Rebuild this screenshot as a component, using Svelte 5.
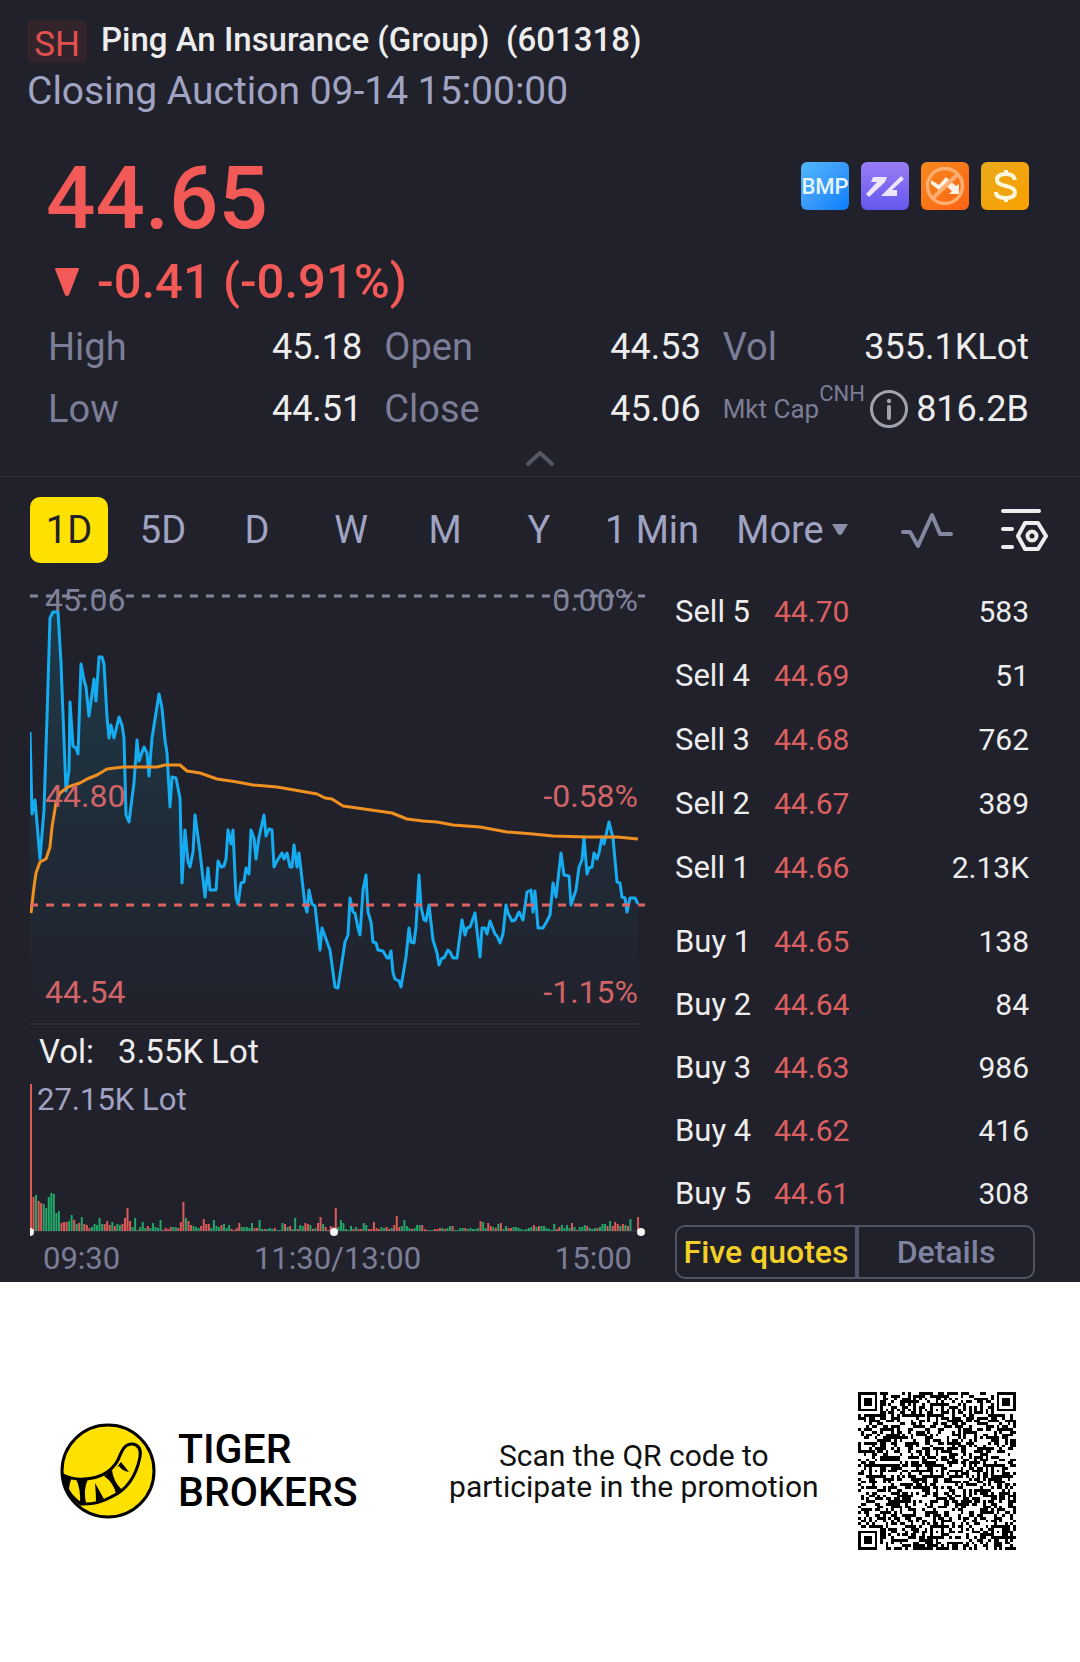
<script>
  const stats = [
    { label: 'High', value: '45.18' },
    { label: 'Open', value: '44.53' },
    { label: 'Vol', value: '355.1KLot' },
    { label: 'Low', value: '44.51' },
    { label: 'Close', value: '45.06' },
    { label: 'Mkt Cap', value: '816.2B', currency: 'CNH' },
  ];

  const periods = ['1D', '5D', 'D', 'W', 'M', 'Y', '1 Min'];
  let period = $state('1D');
  let panel = $state('quotes');

  const sells = [
    ['Sell 5', '44.70', '583'],
    ['Sell 4', '44.69', '51'],
    ['Sell 3', '44.68', '762'],
    ['Sell 2', '44.67', '389'],
    ['Sell 1', '44.66', '2.13K'],
  ];
  const buys = [
    ['Buy 1', '44.65', '138'],
    ['Buy 2', '44.64', '84'],
    ['Buy 3', '44.63', '986'],
    ['Buy 4', '44.62', '416'],
    ['Buy 5', '44.61', '308'],
  ];

  const price =
    '30,732 32,814 35,800 40,859 44,810 47,717 50,618 53,612 58,612 61,663 66,791 69,770 70,702 73,746 76,748 78,754 81,664 84,680 86,687 89,716 94,679 96,701 99,657 102,657 104,664 107,717 109,738 111,725 114,738 119,717 122,725 124,738 126,815 129,822 132,798 134,783 137,740 139,761 144,747 147,753 149,776 152,738 159,694 162,708 165,740 167,753 170,807 172,777 176,778 180,798 182,883 185,830 188,862 190,867 193,852 195,815 200,852 205,897 208,868 210,890 216,890 218,861 221,867 224,866 226,859 228,830 231,844 233,830 236,897 238,904 241,883 244,882 246,868 249,874 251,830 254,838 256,859 259,837 264,815 266,836 269,829 272,830 274,867 277,861 282,853 284,859 287,853 290,867 292,867 294,845 297,867 299,853 305,905 307,912 309,890 312,904 315,906 320,950 322,928 330,950 335,987 338,988 345,942 348,935 350,898 353,912 355,913 358,928 360,935 363,890 366,875 368,912 371,922 373,942 376,943 378,950 383,951 387,958 389,958 391,951 393,973 395,979 399,981 401,987 406,957 409,928 411,942 414,943 416,927 419,875 421,907 424,920 426,921 429,905 433,940 437,953 439,965 442,958 444,958 448,950 450,952 453,958 457,958 462,920 465,935 467,928 470,927 475,913 480,957 482,928 485,928 487,934 490,921 495,934 497,936 500,943 503,934 506,905 508,913 512,921 515,920 519,912 523,920 527,892 531,890 533,912 535,891 538,928 543,928 547,921 550,915 553,883 556,897 561,853 564,875 569,876 571,905 576,890 579,867 582,860 584,837 587,874 589,868 592,867 594,853 597,859 599,853 602,837 604,844 609,822 613,838 617,882 620,883 622,897 625,898 627,912 630,898 635,898 638,904';

  const average =
    '31,913 34,887 36,873 40,862 46,859 50,847 52,827 56,803 60,793 68,787 80,783 87,779 97,775 107,769 123,767 137,767 157,767 165,765 180,765 187,771 200,773 217,779 237,782 253,785 277,787 300,791 317,794 325,798 332,799 343,806 357,808 392,813 407,819 423,821 437,822 453,825 480,827 507,832 533,834 553,836 587,837 617,837 638,839';

  // One entry per minute: r = price fell, g = price rose, number = bar height
  const volume =
    'r147 r34 g36 r30 r28 g27 g23 g34 g38 g37 g18 g20 r8 r9 r9 g10 g16 r11 g7 r8 g14 r7 r6 r3 g4 g7 g6 g13 g7 r7 r10 r6 g9 r5 g7 g6 r7 r13 r23 r10 g4 g13 r1 g4 g9 g3 r5 g3 g8 g4 g3 g11 r1 r3 r2 r4 g4 g4 r3 r9 r29 g13 r10 r6 g5 g4 g3 r5 r12 r7 r7 g3 g11 g5 g4 r6 g7 g3 g6 r2 r1 r3 r8 g4 g4 g4 g3 g8 r3 r3 g11 g2 r2 g2 g3 g2 r3 g1 g1 g8 r7 g4 r5 g2 g13 r2 g6 g5 r8 r7 g6 r2 g3 r8 r14 g7 r4 r1 r5 r4 r23 g4 g11 g8 g2 g1 g5 r2 g4 r2 r2 g8 g6 r2 r2 r9 r3 r2 g4 g3 r4 r2 g3 r6 r15 r4 g5 g11 g5 g3 r2 g3 g6 g6 r6 r2 r1 g1 g1 r2 r2 r3 g3 r2 g3 g5 r5 g1 g1 g3 g3 r3 g2 g3 g2 g2 g3 r10 g9 g3 r8 r5 g4 r3 g7 r8 g2 g5 r3 r3 g4 g4 g3 g2 g1 g2 g3 g4 r6 g4 r5 g5 g5 g3 g2 g1 g7 r2 r4 g6 g3 g6 g3 r8 g4 r1 g4 g4 g6 r5 g3 g2 g3 r3 g4 g7 g7 r5 g10 r5 r9 r7 g5 r7 g6 r5 g12 g0 g0 r14';

  const bars = volume.split(' ').map((v, i) => ({ up: v[0] === 'g', h: +v.slice(1), x: i * 2.54 }));

  const QR = 57;

  function frameCell(dx, dy, r) {
    const d = Math.max(Math.abs(dx), Math.abs(dy));
    return r === 3 ? d === 3 || d < 2 : d !== 1;
  }

  function buildCode() {
    let seed = 601318;
    let d = '';
    for (let y = 0; y < QR; y++) {
      for (let x = 0; x < QR; x++) {
        seed = (Math.imul(seed, 1664525) + 1013904223) >>> 0;
        let on = seed / 4294967296 < 0.5;
        if (x === 6 || y === 6) on = (x + y) % 2 === 0;
        for (const cx of [6, 28, 50])
          for (const cy of [6, 28, 50])
            if (Math.abs(x - cx) < 3 && Math.abs(y - cy) < 3) on = frameCell(x - cx, y - cy, 2);
        for (const [cx, cy] of [[3, 3], [QR - 4, 3], [3, QR - 4]])
          if (Math.abs(x - cx) < 5 && Math.abs(y - cy) < 5)
            on = Math.max(Math.abs(x - cx), Math.abs(y - cy)) < 4 && frameCell(x - cx, y - cy, 3);
        if (on) d += `M${x} ${y}h1v1h-1z`;
      }
    }
    return d;
  }
  const code = buildCode();
</script>

<main>
  <section class="quote">
    <header>
      <div class="name">
        <span class="market">SH</span>
        <h1>Ping An Insurance (Group)&nbsp; (601318)</h1>
      </div>
      <p class="status">Closing Auction 09-14 15:00:00</p>
    </header>

    <div class="summary">
      <div class="last">
        <strong>44.65</strong>
        <p class="change">
          <svg viewBox="0 0 24 28" width="24" height="28" aria-hidden="true"><path d="M0 1Q0 0 1 0H23Q24 0 24 1L14 27Q12 29 10 27Z" fill="#f35956" /></svg>
          -0.41 (-0.91%)
        </p>
      </div>
      <div class="badges">
        <svg viewBox="0 0 48 48" role="img" aria-label="BMP">
          <defs><linearGradient id="b1" x1="0" y1="0" x2="1" y2="1"><stop offset="0" stop-color="#4fb8fb" /><stop offset=".5" stop-color="#3a9bfa" /><stop offset="1" stop-color="#0b7cff" /></linearGradient></defs>
          <rect width="48" height="48" rx="6" fill="url(#b1)" />
          <text x="24" y="32" text-anchor="middle" class="bmp">BMP</text>
        </svg>
        <svg viewBox="0 0 48 48" aria-hidden="true">
          <defs><linearGradient id="b2" x1="0" y1="0" x2="0" y2="1"><stop offset="0" stop-color="#9a7df4" /><stop offset="1" stop-color="#6358ee" /></linearGradient></defs>
          <rect width="48" height="48" rx="6" fill="url(#b2)" />
          <path d="M12 15h14L24 20L8 35l-3-3L16 20h-6zM40 14l3 3L31 28h5v6H20z" fill="#eee6ff" />
        </svg>
        <svg viewBox="0 0 48 48" aria-hidden="true">
          <defs><linearGradient id="b3" x1="0" y1="0" x2="1" y2="1"><stop offset="0" stop-color="#f58a1f" /><stop offset="1" stop-color="#ff6212" /></linearGradient></defs>
          <rect width="48" height="48" rx="6" fill="url(#b3)" />
          <path d="M10 18l8 5 7-8 10 9 3-2v10H28l3-3-6-5-6 5-9-7z" fill="#fff3e8" />
          <circle cx="24" cy="24" r="17.500" fill="none" stroke="#ffae70" stroke-width="3.500" />
          <path d="M36 13L12 36" stroke="#ffae70" stroke-width="4" />
        </svg>
        <svg viewBox="0 0 48 48" aria-hidden="true">
          <defs><linearGradient id="b4" x1="0" y1="0" x2="1" y2="1"><stop offset="0" stop-color="#e9aa1c" /><stop offset="1" stop-color="#fa9f00" /></linearGradient></defs>
          <rect width="48" height="48" rx="6" fill="url(#b4)" />
          <path d="M34 18Q33 12 25 12Q16 12 16 18Q16 22 25 24Q34 26 34 30Q34 36 25 36Q15 36 15 30M25 8v4M25 36v4" fill="none" stroke="#fff8dc" stroke-width="4" />
        </svg>
      </div>
    </div>

    <dl class="stats">
      {#each stats as s}
        <div>
          <dt class:small={s.currency}>{s.label}{#if s.currency}<sup>{s.currency}</sup>{/if}</dt>
          {#if s.currency}
            <button class="plain info" aria-label="About market cap">
              <svg viewBox="0 0 40 40" width="40" height="40"><circle cx="20" cy="20" r="17.500" fill="none" stroke="#a0a2b0" stroke-width="3" /><circle cx="20" cy="12" r="2.200" fill="#a0a2b0" /><path d="M20 18v11" stroke="#a0a2b0" stroke-width="4" stroke-linecap="round" /></svg>
            </button>
          {/if}
          <dd>{s.value}</dd>
        </div>
      {/each}
    </dl>

    <button class="plain fold" aria-label="Collapse details">
      <svg viewBox="0 0 30 18" width="30" height="18"><path d="M3 15L15 4L27 15" fill="none" stroke="#565866" stroke-width="4" stroke-linecap="round" stroke-linejoin="round" /></svg>
    </button>

    <nav class="periods">
      {#each periods as p}
        <button class="plain" class:active={period === p} onclick={() => (period = p)}>{p}</button>
      {/each}
      <button class="plain more">More <svg viewBox="0 0 16 12" width="16" height="12"><path d="M0 0H16L10 10Q8 12 6 10Z" fill="#8a8ea9" /></svg></button>
      <button class="plain" aria-label="Indicators">
        <svg viewBox="0 0 54 38" width="54" height="38"><path d="M3 21H10L18 35L32 4L40 23H51" fill="none" stroke="#83879f" stroke-width="4" stroke-linecap="round" stroke-linejoin="round" /></svg>
      </button>
      <button class="plain" aria-label="Chart settings">
        <svg viewBox="0 0 48 44" width="48" height="44" fill="none" stroke="#ededed" stroke-width="4" stroke-linecap="round" stroke-linejoin="round"><path d="M3 3H39M3 21H12M3 39H12M25 15H38L46 28L38 41H25L18 28Z" /><circle cx="32" cy="28" r="4.500" /></svg>
      </button>
    </nav>

    <div class="board">
      <div class="charts">
        <svg class="chart" viewBox="30 579 615 446" role="img" aria-label="Intraday price">
          <defs><linearGradient id="area" x1="0" y1="0" x2="0" y2="1"><stop offset="0" stop-color="#0fb8e0" stop-opacity=".16" /><stop offset="1" stop-color="#0fb8e0" stop-opacity="0" /></linearGradient></defs>
          <polygon points="30,1024 {price} 638,1024" fill="url(#area)" />
          <path d="M30 596H645" stroke="#83869c" stroke-width="3" stroke-dasharray="8 8" />
          <path d="M30 1024H645" stroke="#2f303c" stroke-width="1" />
          <polyline points={price} fill="none" stroke="#16acf2" stroke-width="3" stroke-linejoin="round" />
          <polyline points={average} fill="none" stroke="#ef9021" stroke-width="3" stroke-linejoin="round" />
          <path d="M30 905H645" stroke="#dc6465" stroke-width="3" stroke-dasharray="8 8" />
          <g class="axis">
            <text x="45" y="611" class="flat">45.06</text>
            <text x="45" y="807">44.80</text>
            <text x="45" y="1003">44.54</text>
            <g text-anchor="end">
              <text x="638" y="611" class="flat">0.00%</text>
              <text x="638" y="807">-0.58%</text>
              <text x="638" y="1003">-1.15%</text>
            </g>
          </g>
        </svg>
        <p class="volnow"><span>Vol:</span><span>3.55K Lot</span></p>
        <svg class="volume" viewBox="0 -4 615 157" role="img" aria-label="Volume">
          <path d="M0 148H615" stroke="#3a3c48" stroke-width="1" />
          {#each bars as b}
            <rect x={b.x} y={148 - b.h} width="2" height={b.h} fill={b.up ? '#23a768' : '#dc5a57'} />
          {/each}
          <text x="7" y="27">27.15K Lot</text>
          <g fill="#f4f4f4"><circle cx="0" cy="149" r="4" /><circle cx="304" cy="149" r="4" /><circle cx="611" cy="149" r="4" /></g>
        </svg>
        <div class="times"><time>09:30</time><time>11:30/13:00</time><time>15:00</time></div>
      </div>

      <div class="book">
        <table>
          {#each [sells, buys] as side}
            <tbody>
              {#each side as [level, p, lots]}
                <tr><th scope="row">{level}</th><td class="p">{p}</td><td class="lots">{lots}</td></tr>
              {/each}
            </tbody>
          {/each}
        </table>
        <div class="tabs">
          <button class="plain" class:on={panel === 'quotes'} onclick={() => (panel = 'quotes')}>Five quotes</button>
          <button class="plain" class:on={panel === 'details'} onclick={() => (panel = 'details')}>Details</button>
        </div>
      </div>
    </div>
  </section>

  <footer>
    <div class="brand">
      <svg viewBox="0 0 96 96" width="96" height="96" aria-hidden="true">
        <circle cx="48" cy="48" r="46" fill="#ffe100" />
        <path d="M3 52Q14 57 24 56Q48 55 58 37Q60 32 62 28Q66 20 73 21Q82 23 80 34Q74 64 51 74Q37 82 21 81Q5 70 3 52Z" fill="#ffe100" stroke="#000" stroke-width="3" />
        <path d="M2 50L12 55Q9 60 9 69Q3 62 2 50ZM16 56H28Q23 67 26 80L20 81Q21 66 16 56ZM35 60L44 76L36 79Q36 70 35 60ZM44 53L52 47Q53 58 62 67L56 71Q54 60 44 53ZM57 44L61 39L69 49Q62 48 59 43Z" fill="#000" />
        <circle cx="48" cy="48" r="46" fill="none" stroke="#000" stroke-width="3" />
      </svg>
      <p>TIGER<br />BROKERS</p>
    </div>
    <p class="scan">Scan the QR code to<br />participate in the promotion</p>
    <svg class="qr" viewBox="0 0 57 57" shape-rendering="crispEdges" role="img" aria-label="QR code"><path d={code} /></svg>
  </footer>
</main>

<style>
  :global(body) {
    margin: 0;
    background: #fff;
  }
  main {
    font-family: Roboto, 'Liberation Sans', sans-serif;
    color: #ededed;
  }
  p,
  h1,
  dl,
  dd {
    margin: 0;
  }
  svg {
    display: block;
    flex: none;
  }
  .plain {
    appearance: none;
    border: 0;
    margin: 0;
    padding: 0;
    background: none;
    color: inherit;
    font: inherit;
    cursor: pointer;
  }
  .quote {
    background: #21212b;
  }
  header {
    padding: 20px 27px 0;
  }
  .name {
    display: flex;
    gap: 14px;
  }
  .market {
    box-sizing: border-box;
    width: 60px;
    height: 43px;
    line-height: 49px;
    border-radius: 6px;
    background: #33242c;
    color: #e0504f;
    font-size: 35px;
    text-align: center;
  }
  h1 {
    font-size: 33px;
    font-weight: 500;
    line-height: 40px;
  }
  .status {
    font-size: 39px;
    line-height: 56px;
    color: #a0a4c2;
  }
  .summary {
    display: flex;
    justify-content: space-between;
    padding: 43px 51px 0 46px;
    color: #f35956;
  }
  .last strong {
    display: block;
    font-size: 87px;
    font-weight: 500;
    line-height: 72px;
  }
  .change {
    display: flex;
    align-items: center;
    gap: 18px;
    padding-left: 9px;
    margin-top: 20px;
    font-size: 49px;
    font-weight: 500;
    line-height: 56px;
  }
  .badges {
    display: flex;
    gap: 12px;
  }
  .badges svg {
    width: 48px;
    height: 48px;
  }
  .bmp {
    font-size: 22px;
    font-weight: 500;
    fill: #e4f5ff;
  }
  .stats {
    display: grid;
    grid-template-columns: 314fr 316fr 306fr;
    column-gap: 22px;
    padding: 6px 51px 0 48px;
  }
  .stats div {
    display: flex;
    align-items: center;
    height: 62px;
  }
  dt {
    font-size: 38px;
    color: #7b7e96;
  }
  dt.small {
    font-size: 26px;
    line-height: 32px;
  }
  sup {
    font-size: 22px;
    line-height: 0;
    vertical-align: 17px;
  }
  .info {
    margin-left: 4px;
  }
  dd {
    margin-left: auto;
    font-size: 36px;
  }
  .fold {
    display: flex;
    justify-content: center;
    width: 100%;
    height: 37px;
    padding-top: 9px;
    border-bottom: 1px solid #2f303c;
  }
  .periods {
    display: grid;
    grid-template-columns: repeat(6, 94fr) 132fr 148fr 122fr 72fr;
    align-items: center;
    padding: 20px 20px 0 22px;
    font-size: 38px;
    line-height: 66px;
    color: #a0a4c2;
  }
  .periods button {
    display: flex;
    justify-content: center;
    align-items: center;
    height: 66px;
    white-space: nowrap;
  }
  .periods .active {
    margin: 0 8px;
    border-radius: 10px;
    background: #ffe100;
    color: #21212b;
  }
  .more {
    gap: 8px;
  }
  .board {
    display: grid;
    grid-template-columns: 615fr 360fr;
    column-gap: 30px;
    padding: 16px 45px 0 30px;
  }
  .chart,
  .volume {
    width: 100%;
    height: auto;
  }
  .axis {
    font-size: 32px;
    fill: #d06467;
  }
  .axis .flat {
    fill: #7f8299;
  }
  .volnow {
    display: flex;
    gap: 24px;
    padding-left: 9px;
    font-size: 33px;
    line-height: 54px;
  }
  .volume text {
    font-size: 31px;
    fill: #a0a4c2;
  }
  .times {
    display: flex;
    justify-content: space-between;
    padding: 0 13px;
    font-size: 31px;
    line-height: 46px;
    color: #7b7e96;
  }
  table {
    width: 100%;
    border-collapse: collapse;
    font-size: 30px;
  }
  tr {
    height: 64px;
  }
  tbody + tbody tr {
    height: 63px;
  }
  tbody + tbody::before {
    content: '';
    display: block;
    height: 11px;
  }
  th {
    width: 99px;
    padding: 0;
    font-size: 31px;
    font-weight: 400;
    text-align: left;
  }
  td {
    padding: 0;
  }
  .p {
    color: #dc5f60;
  }
  .lots {
    padding-right: 6px;
    text-align: right;
  }
  .tabs {
    display: grid;
    grid-template-columns: 1fr 1fr;
    border: 2px solid #515464;
    border-radius: 10px;
    font-size: 32px;
    font-weight: 500;
    line-height: 50px;
    color: #7f83a0;
  }
  .tabs button {
    white-space: nowrap;
  }
  .tabs button + button {
    border-left: 4px solid #515464;
  }
  .tabs .on {
    color: #f3cf27;
  }
  footer {
    display: flex;
    align-items: center;
    justify-content: space-between;
    padding: 110px 64px 0 60px;
    color: #000;
  }
  .brand {
    display: flex;
    align-items: center;
    gap: 22px;
    font-size: 41px;
    font-weight: 500;
    line-height: 43px;
  }
  .scan {
    margin-left: 52px;
    font-size: 30px;
    line-height: 31px;
    text-align: center;
    color: #111;
  }
  .qr {
    width: 158px;
    height: 158px;
  }
</style>
